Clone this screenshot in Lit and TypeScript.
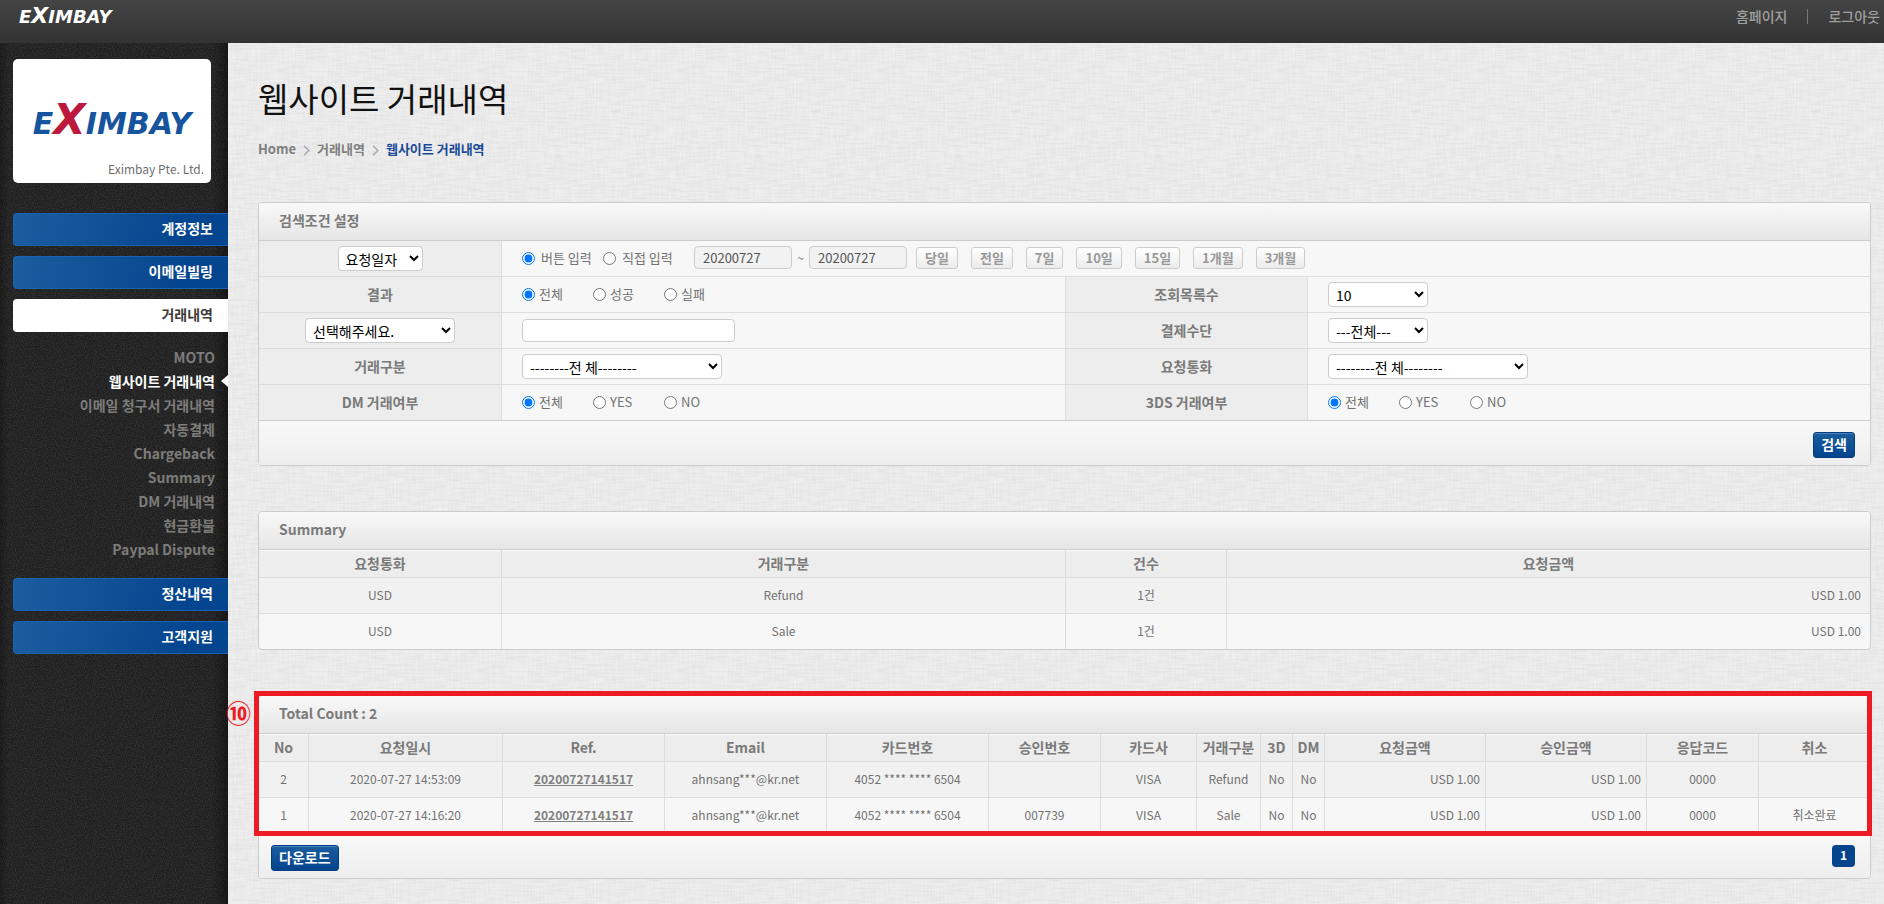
import { LitElement, html, css, nothing } from "lit";
import { customElement, property } from "lit/decorators.js";

const sans = css`"Noto Sans CJK KR", "Noto Sans", sans-serif`;

/** Wordmark: large X between smaller slanted capitals. */
@customElement("brand-mark")
class BrandMark extends LitElement {
  @property({ type: Boolean, reflect: true }) mono = false;

  static styles = css`
    :host {
      display: inline-flex;
      align-items: baseline;
      font-family: "DejaVu Sans", sans-serif;
      font-weight: 700;
      font-style: italic;
      font-size: 30px;
      line-height: 1;
      color: #16549d;
    }
    .x {
      font-size: 42px;
      line-height: 1;
      color: #bb1a3c;
    }
    :host([mono]) {
      font-size: 18px;
      color: #fff;
    }
    :host([mono]) .x {
      font-size: 22px;
      color: #fff;
    }
  `;

  render() {
    return html`<span>E</span><span class="x">X</span><span>IMBAY</span>`;
  }
}

interface MenuEntry {
  label: string;
  open?: boolean;
  children?: string[];
}

const MENU: MenuEntry[] = [
  { label: "계정정보" },
  { label: "이메일빌링" },
  {
    label: "거래내역",
    open: true,
    children: [
      "MOTO",
      "웹사이트 거래내역",
      "이메일 청구서 거래내역",
      "자동결제",
      "Chargeback",
      "Summary",
      "DM 거래내역",
      "현금환불",
      "Paypal Dispute",
    ],
  },
  { label: "정산내역" },
  { label: "고객지원" },
];

@customElement("side-menu")
class SideMenu extends LitElement {
  static styles = css`
    :host {
      display: block;
      font-family: ${sans};
      font-size: 14px;
      line-height: 24px;
      font-weight: 700;
    }
    a {
      color: inherit;
      text-decoration: none;
    }
    ul {
      list-style: none;
      margin: 0;
      padding: 0;
    }
    .menu {
      display: flex;
      flex-direction: column;
      gap: 10px;
    }
    .top {
      display: block;
      box-sizing: border-box;
      height: 33px;
      padding: 2px 15px 0 0;
      border: 1px solid #1a61b3;
      border-right: 0;
      border-radius: 4px 0 0 4px;
      background: linear-gradient(100deg, #1c5d9f, #04458f 80%);
      color: #fff;
      text-align: right;
    }
    .top.open {
      background: #fff;
      border-color: #fff;
      color: #3f3a3a;
    }
    .sub {
      padding: 13px 0 7px;
      color: #7c7c7a;
      text-align: right;
    }
    .sub li {
      display: flex;
      align-items: center;
      justify-content: flex-end;
      height: 24px;
    }
    .sub li::after {
      content: "";
      box-sizing: border-box;
      width: 13px;
    }
    .sub .current {
      color: #fff;
    }
    .sub .current::after {
      border: 6px solid transparent;
      border-right: 7px solid #fff;
    }
  `;

  render() {
    return html`<nav aria-label="메뉴">
      <ul class="menu">
        ${MENU.map(
          (m) => html`<li>
            <a href="#" class="top ${m.open ? "open" : ""}">${m.label}</a>
            ${m.children
              ? html`<ul class="sub">
                  ${m.children.map(
                    (c, i) => html`<li class=${i === 1 ? "current" : ""}><a href="#">${c}</a></li>`
                  )}
                </ul>`
              : nothing}
          </li>`
        )}
      </ul>
    </nav>`;
  }
}

const PERIODS = ["당일", "전일", "7일", "10일", "15일", "1개월", "3개월"];

/** Column title and its relative width. */
type Column = [string, number];

const SEARCH_WIDTHS = [243, 564, 242, 562];

const SUMMARY_COLS: Column[] = [
  ["요청통화", 243],
  ["거래구분", 564],
  ["건수", 161],
  ["요청금액", 643],
];
const SUMMARY_ROWS = [
  ["USD", "Refund", "1건", "USD 1.00"],
  ["USD", "Sale", "1건", "USD 1.00"],
];

const LIST_COLS: Column[] = [
  ["No", 50],
  ["요청일시", 194],
  ["Ref.", 162],
  ["Email", 162],
  ["카드번호", 162],
  ["승인번호", 112],
  ["카드사", 96],
  ["거래구분", 64],
  ["3D", 32],
  ["DM", 32],
  ["요청금액", 161],
  ["승인금액", 161],
  ["응답코드", 112],
  ["취소", 111],
];
const LIST_ROWS = [
  ["2", "2020-07-27 14:53:09", "20200727141517", "ahnsang***@kr.net", "4052 **** **** 6504", "", "VISA", "Refund", "No", "No", "USD 1.00", "USD 1.00", "0000", ""],
  ["1", "2020-07-27 14:16:20", "20200727141517", "ahnsang***@kr.net", "4052 **** **** 6504", "007739", "VISA", "Sale", "No", "No", "USD 1.00", "USD 1.00", "0000", "취소완료"],
];

@customElement("app-root")
class AppRoot extends LitElement {
  static styles = css`
    :host {
      display: flex;
      flex-direction: column;
      min-height: 100vh;
      font-family: ${sans};
      font-size: 12px;
      line-height: 20px;
      color: #727272;
      --linen: url("data:image/svg+xml,%3Csvg xmlns='http://www.w3.org/2000/svg' width='200' height='200'%3E%3Cfilter id='h' x='0' y='0' width='1' height='1'%3E%3CfeTurbulence type='fractalNoise' baseFrequency='.05 .6' numOctaves='2' stitchTiles='stitch'/%3E%3CfeColorMatrix values='0 0 0 0 0 0 0 0 0 0 0 0 0 0 0 .1 0 0 0 -.04'/%3E%3C/filter%3E%3Cfilter id='v' x='0' y='0' width='1' height='1'%3E%3CfeTurbulence type='fractalNoise' baseFrequency='.6 .05' numOctaves='2' seed='4' stitchTiles='stitch'/%3E%3CfeColorMatrix values='0 0 0 0 1 0 0 0 0 1 0 0 0 0 1 .6 0 0 0 -.22'/%3E%3C/filter%3E%3Crect width='200' height='200' filter='url(%23h)'/%3E%3Crect width='200' height='200' filter='url(%23v)'/%3E%3C/svg%3E");
      --grain: url("data:image/svg+xml,%3Csvg xmlns='http://www.w3.org/2000/svg' width='160' height='160'%3E%3Cfilter id='n' x='0' y='0' width='1' height='1'%3E%3CfeTurbulence type='fractalNoise' baseFrequency='.9' numOctaves='2' stitchTiles='stitch'/%3E%3CfeColorMatrix values='0 0 0 0 1 0 0 0 0 1 0 0 0 0 1 .22 0 0 0 -.08'/%3E%3C/filter%3E%3Crect width='160' height='160' filter='url(%23n)'/%3E%3C/svg%3E");
    }
    a {
      color: inherit;
      text-decoration: none;
    }

    .topbar {
      display: flex;
      justify-content: space-between;
      box-sizing: border-box;
      height: 43px;
      padding: 5px 4px 0 19px;
      background: linear-gradient(#454545, #323232);
    }
    .topnav {
      display: flex;
      align-items: center;
      gap: 20px;
      height: 22px;
      font-size: 14px;
      font-weight: 500;
      color: #a0a0a0;
    }
    .topnav a + a {
      padding-left: 20px;
      border-left: 1px solid #777;
      line-height: 15px;
    }

    .body {
      flex: 1;
      display: flex;
    }
    aside {
      flex: none;
      box-sizing: border-box;
      width: 228px;
      padding: 16px 0 16px 13px;
      background: linear-gradient(90deg, #0004, #0000 8px, #0000 212px, #0006), var(--grain), #1f1f1f;
    }
    .card {
      display: flex;
      flex-direction: column;
      align-items: center;
      justify-content: space-between;
      box-sizing: border-box;
      width: 198px;
      height: 124px;
      margin-bottom: 30px;
      padding: 40px 7px 4px;
      border-radius: 5px;
      background: #fff;
      color: #6f6f6f;
    }
    .company {
      align-self: flex-end;
    }

    main {
      flex: 1;
      min-width: 0;
      padding: 32px 13px 25px 30px;
      background: var(--linen), #ebebeb;
    }
    h1 {
      margin: 0 0 17px;
      font-size: 33px;
      line-height: 47px;
      font-weight: 400;
      color: #111;
    }
    .crumbs {
      display: flex;
      align-items: center;
      gap: 7px;
      margin-bottom: 43px;
      font-size: 13px;
      font-weight: 700;
      color: #808080;
    }
    .crumbs svg {
      width: 7px;
      height: 11px;
      margin-top: 2px;
      fill: none;
      stroke: #aaa;
      stroke-width: 1.5;
    }
    .crumbs .here {
      color: #1b4a97;
    }

    .panel {
      margin-bottom: 45px;
      border: 1px solid #ccc;
      border-radius: 4px;
      background: #f7f7f7;
    }
    .panel:last-child {
      margin-bottom: 0;
    }
    h2 {
      box-sizing: border-box;
      height: 38px;
      margin: 0;
      padding: 7px 20px;
      border-bottom: 1px solid #ccc;
      border-radius: 3px 3px 0 0;
      background: linear-gradient(#f9f9f9, #e6e6e6);
      font-size: 14px;
      line-height: 20px;
      font-weight: 700;
      color: #7a7a7a;
    }
    .foot {
      display: flex;
      align-items: flex-start;
      justify-content: space-between;
      box-sizing: border-box;
      height: 45px;
      padding: 11px 15px 0 12px;
      border-top: 1px solid #ccc;
      border-radius: 0 0 3px 3px;
      background: linear-gradient(#f8f8f8, #eee);
    }
    .foot.end {
      justify-content: flex-end;
    }

    table {
      width: 100%;
      table-layout: fixed;
      border-collapse: separate;
      border-spacing: 0;
    }
    th,
    td {
      box-sizing: border-box;
      height: 36px;
      padding: 0 0 2px;
      border-right: 1px solid #ddd;
      border-bottom: 1px solid #ddd;
      text-align: center;
      white-space: nowrap;
    }
    th:last-child,
    td:last-child {
      border-right: 0;
    }
    tbody tr:last-child > * {
      height: 35px;
      border-bottom: 0;
    }
    th {
      background: #ededed;
      font-size: 14px;
      font-weight: 700;
      color: #7a7a7a;
    }
    thead th {
      height: 28px;
      box-shadow: inset 0 1px #fff;
    }
    .list tbody tr:nth-child(odd) {
      background: #f1f1f1;
    }
    .list td.amount {
      padding-right: 9px;
      text-align: right;
    }
    .list.dense td.amount {
      padding-right: 5px;
    }
    .ref {
      font-weight: 700;
      text-decoration: underline;
      color: #808080;
    }

    .search td {
      padding-left: 20px;
      text-align: left;
    }
    .search .field {
      padding-bottom: 0;
    }
    .controls {
      display: flex;
      align-items: center;
    }
    .choice {
      display: flex;
      align-items: center;
      gap: 4px;
      min-width: 71px;
      font-size: 13px;
    }
    .choice.loose {
      gap: 6px;
      margin-right: 10px;
    }
    input[type="radio"] {
      width: 13px;
      height: 13px;
      margin: 2px 0 0;
    }
    select,
    input[type="text"] {
      box-sizing: border-box;
      border: 1px solid #ccc;
      border-radius: 4px;
      background: #fff;
      font-family: inherit;
      color: #000;
    }
    select {
      height: 25px;
      padding: 0 3px;
      font-size: 14px;
      vertical-align: middle;
    }
    .w85 {
      width: 85px;
    }
    .w100 {
      width: 100px;
    }
    .w150 {
      width: 150px;
    }
    .w200 {
      width: 200px;
    }
    input[type="text"] {
      width: 213px;
      height: 23px;
      padding: 0 8px;
      font-size: 13px;
    }
    input.date {
      width: 98px;
      background: #f2f2f2;
      color: #555;
    }
    .range {
      display: flex;
      align-items: center;
      margin-left: 10px;
    }
    .gap {
      width: 17px;
      text-align: center;
    }
    .periods {
      display: flex;
      gap: 13px;
      margin-left: 9px;
    }
    .period {
      height: 22px;
      padding: 0 8px;
      border: 1px solid #ccc;
      border-radius: 3px;
      background: linear-gradient(#fff, #ececec);
      font-family: inherit;
      font-size: 13px;
      line-height: 18px;
      font-weight: 700;
      color: #999;
    }

    .action {
      height: 26px;
      padding: 0 7px 2px;
      border: 1px solid #043d80;
      border-radius: 3px;
      background: linear-gradient(#1c5d9f, #04448d);
      box-shadow: inset 0 1px #4a80b8;
      font-family: inherit;
      font-size: 14px;
      line-height: 20px;
      font-weight: 700;
      color: #fff;
    }
    .page {
      width: 23px;
      height: 22px;
      border-radius: 4px;
      background: #04448d;
      font-weight: 700;
      text-align: center;
      color: #fff;
    }

    .marked {
      position: relative;
    }
    .frame {
      position: absolute;
      inset: -5px -2px -3px -5px;
      border: 5px solid #ed1c24;
      pointer-events: none;
    }
    .badge {
      position: absolute;
      top: 0;
      left: -33px;
      font-size: 25px;
      line-height: 32px;
      font-weight: 700;
      color: #ed1c24;
    }
  `;

  private choices(name: string, labels: string[], loose = false) {
    return labels.map(
      (l, i) => html`<label class="choice ${loose ? "loose" : ""}">
        <input type="radio" name=${name} ?checked=${i === 0} />${l}
      </label>`
    );
  }

  private select(cls: string, label: string, value: string) {
    return html`<select class=${cls} aria-label=${label}>
      <option>${value}</option>
    </select>`;
  }

  private cols(weights: number[]) {
    const total = weights.reduce((a, b) => a + b, 0);
    return html`<colgroup>
      ${weights.map((w) => html`<col style="width:${(w / total) * 100}%" />`)}
    </colgroup>`;
  }

  private list(cols: Column[], rows: string[][], cls = "") {
    return html`<table class="list ${cls}">
      ${this.cols(cols.map(([, w]) => w))}
      <thead>
        <tr>
          ${cols.map(([c]) => html`<th scope="col">${c}</th>`)}
        </tr>
      </thead>
      <tbody>
        ${rows.map(
          (r) => html`<tr>
            ${r.map((v, i) => {
              const name = cols[i][0];
              return html`<td class=${name.endsWith("금액") ? "amount" : ""}>
                ${name === "Ref." ? html`<a class="ref" href="#">${v}</a>` : v}
              </td>`;
            })}
          </tr>`
        )}
      </tbody>
    </table>`;
  }

  private chevron() {
    return html`<svg viewBox="0 0 7 11" aria-hidden="true"><path d="M1 .8 5.8 5.5 1 10.2" /></svg>`;
  }

  render() {
    return html`
      <header class="topbar">
        <a href="#"><brand-mark mono></brand-mark></a>
        <nav class="topnav"><a href="#">홈페이지</a><a href="#">로그아웃</a></nav>
      </header>
      <div class="body">
        <aside>
          <div class="card">
            <brand-mark></brand-mark>
            <span class="company">Eximbay Pte. Ltd.</span>
          </div>
          <side-menu></side-menu>
        </aside>
        <main>
          <h1>웹사이트 거래내역</h1>
          <nav class="crumbs" aria-label="경로">
            <a href="#">Home</a>${this.chevron()}<a href="#">거래내역</a>${this.chevron()}<a class="here" href="#">웹사이트 거래내역</a>
          </nav>

          <form class="panel" @submit=${(e: Event) => e.preventDefault()}>
            <h2>검색조건 설정</h2>
            <table class="search">
              ${this.cols(SEARCH_WIDTHS)}
              <tbody>
                <tr>
                  <th class="field">${this.select("w85", "일자 기준", "요청일자")}</th>
                  <td colspan="3">
                    <div class="controls">
                      ${this.choices("mode", ["버튼 입력", "직접 입력"], true)}
                      <div class="range">
                        <input class="date" type="text" readonly aria-label="시작일" .value=${"20200727"} />
                        <span class="gap">~</span>
                        <input class="date" type="text" readonly aria-label="종료일" .value=${"20200727"} />
                      </div>
                      <div class="periods">
                        ${PERIODS.map((p) => html`<button class="period" type="button">${p}</button>`)}
                      </div>
                    </div>
                  </td>
                </tr>
                <tr>
                  <th>결과</th>
                  <td><div class="controls">${this.choices("result", ["전체", "성공", "실패"])}</div></td>
                  <th>조회목록수</th>
                  <td class="field">${this.select("w100", "조회목록수", "10")}</td>
                </tr>
                <tr>
                  <th class="field">${this.select("w150", "검색 항목", "선택해주세요.")}</th>
                  <td class="field"><div class="controls"><input type="text" aria-label="검색어" /></div></td>
                  <th>결제수단</th>
                  <td class="field">${this.select("w100", "결제수단", "---전체---")}</td>
                </tr>
                <tr>
                  <th>거래구분</th>
                  <td class="field">${this.select("w200", "거래구분", "--------전 체--------")}</td>
                  <th>요청통화</th>
                  <td class="field">${this.select("w200", "요청통화", "--------전 체--------")}</td>
                </tr>
                <tr>
                  <th>DM 거래여부</th>
                  <td><div class="controls">${this.choices("dm", ["전체", "YES", "NO"])}</div></td>
                  <th>3DS 거래여부</th>
                  <td><div class="controls">${this.choices("tds", ["전체", "YES", "NO"])}</div></td>
                </tr>
              </tbody>
            </table>
            <div class="foot end"><button class="action" type="submit">검색</button></div>
          </form>

          <section class="panel">
            <h2>Summary</h2>
            ${this.list(SUMMARY_COLS, SUMMARY_ROWS)}
          </section>

          <section class="panel">
            <div class="marked">
              <h2>Total Count : 2</h2>
              ${this.list(LIST_COLS, LIST_ROWS, "dense")}
              <div class="frame"></div>
              <span class="badge">⑩</span>
            </div>
            <div class="foot">
              <button class="action" type="button">다운로드</button>
              <a class="page" href="#">1</a>
            </div>
          </section>
        </main>
      </div>
    `;
  }
}
